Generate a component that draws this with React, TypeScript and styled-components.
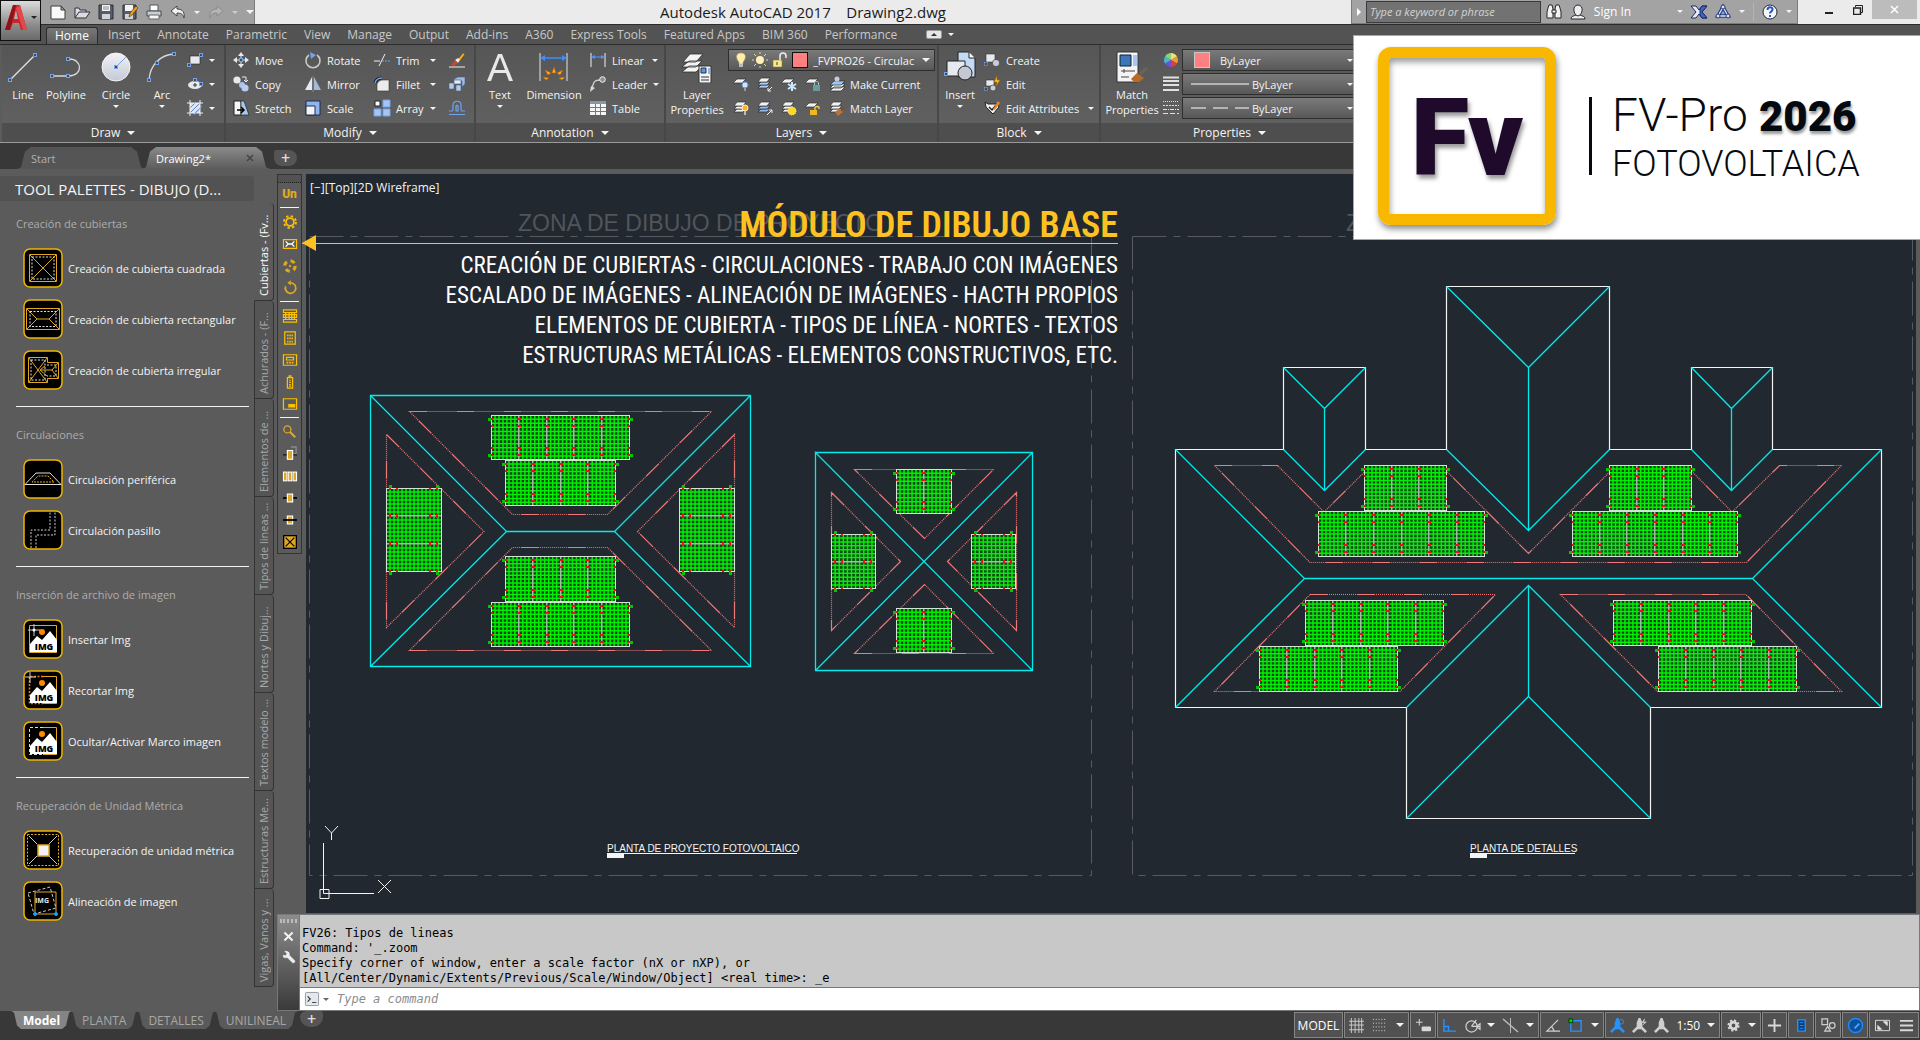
import React from "react";
import styled, { createGlobalStyle, css } from "styled-components";

const GlobalStyle = createGlobalStyle`
  *, *::before, *::after { box-sizing: border-box; }
  body { margin: 0; background: #383838; font-family: "Open Sans", "Noto Sans", sans-serif; font-size: 11px; color: #f4f4f4; }
  button, input, select { font: inherit; color: inherit; margin: 0; padding: 0; border: 0; background: none; outline: none; }
  button { cursor: pointer; }
  svg { display: block; flex: none; }
`;

/* ------------------------------------------------------------------ */
/* Icons                                                               */
/* ------------------------------------------------------------------ */

const BLUE = "#6fa4f4";
const LIGHT = "#e6e9f0";
const GOLD = "#e0a820";
const YELLOW = "#fcc000";

const Grip = ({ x, y }: { x: number; y: number }) => (
  <rect x={x - 1.5} y={y - 1.5} width="3" height="3" fill="#4a4a4a" stroke={BLUE} />
);

const Sheets = ({ top = "#f2f2f2", base = "#f2f2f2" }: { top?: string; base?: string }) => (
  <g stroke="#2e2e2e" strokeWidth=".7">
    <path d="M1 12l3-3h9l-3 3z" fill={base} />
    <path d="M1 9l3-3h9l-3 3z" fill={base} />
    <path d="M1 6l3-4h9l-3 4z" fill={top} />
  </g>
);

const Flat = () => <path d="M0 7l4-4h9l-4 4z" fill="#f2f2f2" stroke="#2e2e2e" strokeWidth=".7" />;

const Person = ({ color, children }: { color: string; children?: React.ReactNode }) => (
  <g fill={color}>
    <path d="M7 0h2l2 5v4l5 5-2 2-4-4H6l-4 4-2-2 5-5V5z" />
    {children}
  </g>
);

const glyphs: Record<string, React.ReactNode> = {
  new: <path d="M1 2h10l4 4v9H1z M11 2v4h4" fill="#fafafa" stroke="#3c3c3c" />,
  open: <path d="M1 14V4h4l1 2h6v2M1 14l4-6h11l-4 6z" fill="#d9dde3" stroke="#2f3237" />,
  save: <g><path d="M1 1h14v14H1z" fill="#565d68" stroke="#2b2f35" /><path d="M4 1h8v6H4z" fill="#f4f4f4" /><path d="M4 10h8v5H4z" fill="#cfd3da" /><path d="M5 3h6M5 5h6" stroke="#888" /></g>,
  saveas: <g><path d="M1 1h13v14H1z" fill="#565d68" stroke="#2b2f35" /><path d="M3 1h8v6H3z" fill="#f4f4f4" /><path d="M3 10h8v5H3z" fill="#cfd3da" /><path d="M7 13l1-4 6-7 2 2-6 7z" fill="#f0a020" stroke="#5a3a10" strokeWidth=".7" /></g>,
  print: <g><path d="M4 1h8v6H4z" fill="#fff" stroke="#555" /><path d="M1 7h14v5H1z" fill="#c9ced6" stroke="#44484f" /><path d="M3 11h10v4H3z" fill="#f6f6f6" stroke="#666" /></g>,
  undo: <path d="M7 2L1 7l6 5V9c4 0 6 1 7 5 1-5-1-9-7-9z" fill="#f2f2f2" stroke="#444" />,
  redo: <path d="M9 2l6 5-6 5V9c-4 0-6 1-7 5-1-5 1-9 7-9z" fill="#b5b5b5" stroke="#8a8a8a" />,
  search: <g fill="#f2f2f2" stroke="#26282c"><path d="M2 4l1-3h3l1 4v9H1V8z" /><path d="M14 4l-1-3h-3L9 5v9h6V8z" /><path d="M6 6h4v3H6z" /></g>,
  user: <g fill="#eceef2" stroke="#26282c"><path d="M1 15c0-3 3-3 5-4h4c2 1 5 1 5 4z" /><path d="M8 1c6 0 5 10 0 11C3 11 2 1 8 1z" /></g>,
  exchange: <g stroke="#1b2a66"><path d="M0 2h5l3 4 3-4h5l-5 6 5 6h-5l-3-4-3 4H0l5-6z" fill="#e8ecfa" /><path d="M9 5l2-3h5l-5 6 5 6h-5l-2-3z" fill="#3f63c8" /></g>,
  a360: <g fill="none" stroke="#1f3a80"><path d="M8 3l5 9H3z" strokeWidth="3.5" /><path d="M8 3l5 9H3z" stroke="#dfe6f8" strokeWidth="1.3" /><circle cx="8" cy="3" r="2" fill="#dfe6f8" /><circle cx="3" cy="12" r="2" fill="#dfe6f8" /><circle cx="13" cy="12" r="2" fill="#dfe6f8" /></g>,
  help: <g><circle cx="8" cy="8" r="7" fill="#f4f6fb" stroke="#26282c" /><path d="M5.5 6c0-4 5-3.500 5-.5 0 2-2.500 2-2.500 4M8 11v2" fill="none" stroke="#2456c8" strokeWidth="2" /></g>,

  rect: <g><path d="M3 4h10v8H3z" fill={LIGHT} stroke="#222" strokeWidth=".6" /><Grip x={14} y={3} /><Grip x={2} y={13} /></g>,
  ellipse: <g><ellipse cx="8" cy="9" rx="7" ry="4" fill={LIGHT} /><path d="M6 9h4M8 7v4" stroke="#333" /><Grip x={8} y={4} /><Grip x={14} y={8} /></g>,
  hatch: <g><path d="M3 3h10v10H3z" fill="#dce6f8" /><path d="M3 8l5-5M3 13L13 3M8 13l5-5" stroke="#5d83c8" /><path d="M3 0v16M13 0v16M0 3h16M0 13h16" stroke="#f0f0f0" /><path d="M7 15l8-9" stroke={BLUE} /></g>,
  move: <g><path d="M8 0l3 4H5zM8 16l3-4H5zM0 8l4-3v6zM16 8l-4-3v6z" fill={LIGHT} /><path d="M8 3v10M3 8h10" stroke={LIGHT} /><Grip x={8} y={8} /></g>,
  copy: <g><circle cx="4" cy="4" r="3.600" fill={LIGHT} /><circle cx="9" cy="9" r="3" fill="#a9c4f0" /><circle cx="12" cy="12" r="3.600" fill="#b6cbee" /><path d="M9 1h4v4M11 4l2 2 2-2" fill="none" stroke={LIGHT} /></g>,
  stretch: <g><path d="M1 1h7v14H1z" fill="#f6f6f6" stroke="#222" /><path d="M8 1h3l5 14H8z" fill="#a9c8f0" stroke="#222" strokeWidth=".7" /><path d="M4 10h6M8 7l3 3-3 3" stroke="#000" strokeWidth="1.500" fill="none" /></g>,
  rotate: <g fill="none"><path d="M4 3a7 7 0 1 0 8 0" stroke="#c9c9c9" strokeWidth="1.600" /><path d="M5 0l6 3-5 4z" fill={BLUE} /></g>,
  mirror: <g><path d="M7 1v13H0z" fill={LIGHT} /><path d="M9 1v13h7z" fill="#a5b8d6" /><path d="M8 0v16" stroke="#888" /></g>,
  scale: <g><path d="M1 1h14v14H1z" fill="#8fb4ee" stroke="#1d2f55" /><path d="M1 6h9v9H1z" fill="#f4f4f4" stroke="#1d2f55" /></g>,
  trim: <g fill="none"><path d="M0 9h6M11 2L5 14" stroke="#f0f0f0" /><path d="M8 9h2M11 9h2M14 9h2" stroke={BLUE} /></g>,
  fillet: <g><path d="M3 15V9c0-3 3-5 6-5h6v11z" fill="#ececec" stroke="#333" strokeWidth=".6" /><path d="M1 7c1-4 3-5 7-5" fill="none" stroke="#111" strokeWidth="3" /><path d="M1 7c1-4 3-5 7-5" fill="none" stroke={BLUE} strokeWidth="1.500" /></g>,
  array: <g><path d="M1 1h5v5H1z" fill="#fff" stroke="#222" /><path d="M9 0h7v7H9zM0 9h7v7H0zM9 9h7v7H9z" fill="#a9c4f0" stroke={BLUE} /></g>,
  erase: <g><path d="M0 15h16" stroke="#f0f0f0" /><path d="M9 7l5-6 2 1-5 7z" fill="#f0b030" stroke="#5a3a10" strokeWidth=".5" /><path d="M6 8l3-2 2 2-2 3z" fill="#eee" /><path d="M2 13l4-5 3 3-4 3z" fill="#c84a28" /></g>,
  explode: <g stroke="#46607f" strokeWidth=".6"><path d="M0 7h5v6H0zM7 9h5v6H7z" fill="#b6cbea" /><path d="M5 3l4-2h7v7l-3 3V5H5z" fill="#9dbbe6" /><path d="M5 4h7v4H5z" fill="#dfe9f8" /></g>,
  offset: <path d="M0 14.500h16M0 11h3c1 0 1-1 1-2V5c0-5 8-5 8 0v4c0 1 0 2 1 2h3M7 11V6c0-1 2-1 2 0v5z" fill="none" stroke={BLUE} strokeWidth="1.200" />,
  linear: <g fill="none"><path d="M1 1v14M15 1v14" stroke="#f0f0f0" /><path d="M3 5h10" stroke="#4e94ff" /><path d="M1 5l4-2v4zM15 5l-4-2v4z" fill="#4e94ff" /></g>,
  leader: <g><path d="M2 12c2-6 2-8 8-8" fill="none" stroke="#d8d8d8" strokeWidth="1.300" /><path d="M0 16l1-6 4 2z" fill="#d8d8d8" /><circle cx="12.500" cy="3.500" r="2.800" fill="#8a8f98" stroke="#f0f0f0" /></g>,
  table: <g><path d="M0 1h16v14H0z" fill="#f6f6f6" /><path d="M0 1h16v3H0z" fill="#8a96a8" /><path d="M5.500 4v11M10.500 4v11M0 7.500h16M0 11.500h16" stroke="#777" /></g>,
  bulb: <g><path d="M8 1c6 0 5 6 2 9v2H6v-2C3 7 2 1 8 1z" fill="#ffeeb0" stroke="#c8a850" strokeWidth=".6" /><path d="M6 12h4v3H6z" fill="#bbb" /></g>,
  sun: <g><circle cx="8" cy="8" r="4" fill="#fff0b8" /><path d="M8 0v2M8 14v2M0 8h2M14 8h2M2 2l2 2M12 12l2 2M14 2l-2 2M2 14l2-2" stroke="#e8d890" /></g>,
  unlock: <g><path d="M2 8h9v7H2z" fill="#f8e888" stroke="#8a7a30" strokeWidth=".6" /><path d="M9 8V4c0-4 6-4 6 0v2" fill="none" stroke="#f0f0f0" strokeWidth="1.500" /><path d="M6 10v3" stroke="#333" /></g>,
  lyOff: <g><Flat /><circle cx="12" cy="9" r="3" fill="#cfe4ff" stroke="#6b8fc8" /><path d="M11 12h2v3h-2z" fill="#999" /></g>,
  lyIso: <g><Sheets base="#a9cdf4" /><path d="M15 11l-4 4M11 12v3h3" stroke="#eee" fill="none" /></g>,
  lyFreeze: <g><Flat /><path d="M11 6v9M7 8l8 5M7 13l8-5" stroke="#cfe6ff" strokeWidth="2" /></g>,
  lyLock: <g><Flat /><path d="M8 9h7v6H8z" fill="#6a9c9c" /><path d="M9.500 9V7c0-2 4-2 4 0v2" fill="none" stroke="#a8c8c8" /></g>,
  lyCurrent: <g><path d="M1 15l4-4h11l-4 4zM1 12l4-4h11l-4 4z" fill="#f2f2f2" stroke="#2e2e2e" strokeWidth=".7" /><path d="M1 9l4-4h11l-4 4z" fill="#9ccaf8" stroke="#2e2e2e" strokeWidth=".7" /><circle cx="8" cy="3" r="2.500" fill="#c8ccd4" /></g>,
  lyOn: <g><Sheets /><circle cx="12" cy="8" r="3" fill="#ffb030" stroke="#fff0c0" /><path d="M11 11h2v4h-2z" fill="#bbb" /></g>,
  lyUniso: <g><Sheets base="#8fb4ee" /><path d="M10 15l5-5M12 10h3v3" stroke="#eee" fill="none" /></g>,
  lyThaw: <g><Sheets /><circle cx="11" cy="11" r="4" fill="#ffd820" stroke="#fff2a0" strokeDasharray="1 1" /></g>,
  lyUnlock: <g><Flat /><path d="M5 10h7v5H5z" fill="#f0b820" /><path d="M10 10V8c0-2 4-2 4 0v1" fill="none" stroke="#f0c850" strokeWidth="1.400" /></g>,
  lyMatch: <g><Sheets /><path d="M6 12l4-3 4 3-5 4z" fill="#c07030" /><path d="M12 10l4-3" stroke="#7a5030" strokeWidth="2" /></g>,
  create: <g stroke="#333" strokeWidth=".6"><path d="M2 2h9v8H2z" fill={LIGHT} /><circle cx="12" cy="11" r="3.600" fill="#c8ccd4" /><Grip x={2} y={12} /></g>,
  edit: <g stroke="#333" strokeWidth=".6"><path d="M2 4h8v6H2z" fill={LIGHT} /><circle cx="9" cy="12" r="3" fill="#c8ccd4" /><path d="M13 0l-3 6h3l-1 4 4-6h-3z" fill="#ffc020" stroke="#b06a00" /><Grip x={2} y={13} /></g>,
  attrs: <g><path d="M1 2l3 2h9l2 3-6 7-7-7z" fill="#f2f2f2" stroke="#222" /><path d="M5 7l3 3 4-5" fill="none" stroke="#222" strokeWidth="1.500" /><path d="M9 9l5-8 2 2-5 7z" fill="#e8862a" /></g>,
  wheel: <g><path d="M8 8V1a7 7 0 0 1 6 3.500z" fill="#f0e070" /><path d="M8 8l6-3.500a7 7 0 0 1 0 7z" fill="#f0963c" /><path d="M8 8l6 3.500A7 7 0 0 1 8 15z" fill="#e03c3c" /><path d="M8 8v7a7 7 0 0 1-6-3.500z" fill="#6a50d8" /><path d="M8 8l-6 3.500a7 7 0 0 1 0-7z" fill="#48b4d8" /><path d="M8 8L2 4.500A7 7 0 0 1 8 1z" fill="#8cd078" /></g>,
  weights: <path d="M0 1.500h16M0 5h16M0 9h16M0 14h16" stroke="#e0e0e0" strokeWidth="2" />,
  types: <g stroke="#e0e0e0"><path d="M0 1.500h16" strokeDasharray="1 1" /><path d="M0 5.500h16" strokeDasharray="2 1" /><path d="M0 9.500h16" strokeDasharray="4 1 1 1" /><path d="M0 13.500h16" strokeDasharray="5 2" /></g>,
  wrench: <path d="M2 1l3 3-1 2-3-1c-1 4 2 5 5 4l6 6c2 1 4-1 3-3L9 6c1-4-3-6-7-5z" fill="#eee" stroke="#555" strokeWidth=".5" />,
  cross: <path d="M3 3l10 10M13 3L3 13" stroke="#f2f2f2" strokeWidth="2.500" />,
  prompt: <g><rect x=".5" y=".5" width="15" height="15" rx="1" fill="#e4e8ee" stroke="#8a8f98" /><path d="M3 5l3 3-3 3" fill="none" stroke="#333" strokeWidth="1.300" /><path d="M8 12h5" stroke="#333" /></g>,

  /* vertical toolbar */
  gear: <g fill="none" stroke={YELLOW}><circle cx="8" cy="8" r="4.500" strokeWidth="2" /><circle cx="8" cy="8" r="6.800" strokeWidth="2.200" strokeDasharray="2.700 2.640" /></g>,
  roofbar: <g fill="none"><path d="M.500 3h15v10H.500z" stroke={YELLOW} strokeWidth="1.300" /><path d="M3 5l3 3-3 3M13 5l-3 3 3 3M6 8h4" stroke="#fff" strokeWidth="1.500" /></g>,
  cycle: <g fill="none" stroke={GOLD}><circle cx="8" cy="8" r="6" strokeWidth="3.500" strokeDasharray="5 4.400" /><circle cx="8" cy="8" r="1" fill={GOLD} /></g>,
  spin: <g fill="none" stroke={GOLD}><path d="M3 6a6 6 0 1 0 6-4" strokeWidth="2" /><path d="M9-1v6L5 2z" fill={GOLD} stroke="none" /></g>,
  strings: <g fill="none" stroke={YELLOW} strokeWidth="1.300"><path d="M.500 1h15v3H.500zM.500 6.500h15v3H.500zM.500 12h15v3H.500z" /><path d="M3 4v8M7 4v8M10 4v8M13 4v8" strokeWidth="1.500" /></g>,
  grid: <g><path d="M2 1h12v14H2z" fill="none" stroke={YELLOW} strokeWidth="1.400" /><path d="M5.500 4v9M8 4v9M10.500 4v9" stroke={YELLOW} strokeWidth="1.600" strokeDasharray="2 1.500" /></g>,
  inverter: <g fill="none" stroke={YELLOW} strokeWidth="1.400"><path d="M.500 2h15v12H.500z" /><path d="M4 5h8v3H4z" /><path d="M4 11h8" strokeWidth="2" strokeDasharray="2 1" /></g>,
  battery: <g fill="none" stroke={YELLOW} strokeWidth="1.400"><path d="M5 3h6v12H5zM7 1h2v2H7z" /><path d="M7 6h2M7 8.500h2M7 11h2M7 13h2" /></g>,
  board: <g><path d="M.500 2h15v12H.500z" fill="none" stroke={YELLOW} strokeWidth="1.400" /><path d="M6 8h8v4H6z" fill={YELLOW} /></g>,
  zoomkey: <g fill="none" stroke={GOLD}><circle cx="5" cy="5" r="4" strokeWidth="1.500" /><path d="M8 8l6 6" strokeWidth="2.500" /></g>,
  block1: <g><path d="M9 0h6v8h-3" fill="none" stroke="#8c8c8c" strokeWidth="1.500" /><path d="M0 9h16" stroke="#111" strokeWidth="1.300" /><rect x="5" y="4" width="6" height="10" fill={GOLD} stroke="#fff" strokeWidth="1.300" /></g>,
  block3: <g fill={GOLD} stroke="#fff" strokeWidth="1.200"><rect x=".5" y="3.500" width="4" height="10" /><rect x="6" y="3.500" width="4" height="10" /><rect x="11.500" y="3.500" width="4" height="10" /></g>,
  block4: <g><path d="M0 8h16" stroke="#000" strokeWidth="2" /><rect x="5" y="3.500" width="6" height="9" fill={GOLD} stroke="#fff" strokeWidth="1.300" /></g>,
  block5: <g><rect x="5" y="3.500" width="6" height="9" fill={GOLD} stroke="#fff" strokeWidth="1.300" /><path d="M0 8h16" stroke="#000" strokeWidth="2" /></g>,
  xbox: <g><rect x="0" y="0" width="16" height="16" fill="#000" /><rect x="1.500" y="1.500" width="13" height="13" fill={GOLD} /><path d="M3 3l10 10M13 3L3 13" stroke="#000" strokeWidth="1.300" /></g>,

  /* status bar */
  sGrid: <path d="M2.500 0v16M6.500 0v16M10.500 0v16M13.500 0v16M0 3.500h16M0 7.500h16M0 12.500h16" stroke="#cfcfcf" />,
  sSnap: <path d="M1 1.500h15M1 5.500h15M1 9.500h15M1 13.500h15" stroke="#e4e4e4" strokeDasharray="1 2" />,
  sDyn: <g><path d="M3.500 1v7M0 4.500h7" stroke="#ddd" /><rect x="6" y="9" width="10" height="5" rx="1" fill="#d8d8d8" /></g>,
  sOrtho: <path d="M2 1v13h13M2 9h5v5" fill="none" stroke="#2492ff" strokeWidth="1.500" />,
  sPolar: <g fill="none" stroke="#cfcfcf" strokeWidth="1.300"><circle cx="7" cy="9" r="6" /><path d="M7 9h9M7 9l5-7M12 9l4-3v6z" /></g>,
  sIso: <g stroke="#bdbdbd"><path d="M0 1l16 14" strokeWidth="1.500" /><path d="M8 0v16" /></g>,
  sTrack: <path d="M14 2L2 14h14M7 9l3 5" fill="none" stroke="#cfcfcf" strokeWidth="1.300" />,
  sOsnap: <g><path d="M3 3h11v11H3z" fill="none" stroke="#2492ff" strokeWidth="1.500" /><path d="M1 1h4v4H1z" fill="#00e000" stroke="#003800" /></g>,
  sAnno1: <Person color="#2492ff"><circle cx="12" cy="4" r="2.500" fill="none" stroke="#2492ff" /></Person>,
  sAnno2: <Person color="#cfcfcf"><path d="M14 0l-4 5h3l-3 4 6-5h-3z" /></Person>,
  sAnno3: <Person color="#cfcfcf" />,
  sGear: <g fill="none" stroke="#d8d8d8"><circle cx="8" cy="8" r="3.500" strokeWidth="3" /><circle cx="8" cy="8" r="5.500" strokeWidth="2" strokeDasharray="2.300 2" /></g>,
  sPlus: <path d="M8 1v14M1 8h14" stroke="#d8d8d8" strokeWidth="2" />,
  sDoc: <g><path d="M4 2h8v12H4z" fill="#123a70" stroke="#2492ff" strokeWidth="1.500" /><path d="M6 5h4M6 8h4M6 11h4" stroke="#2492ff" /></g>,
  sShapes: <g fill="none" stroke="#cfcfcf" strokeWidth="1.300"><path d="M1 1h6v6H1zM7 9l3 5H4z" /><circle cx="12" cy="8" r="3" /></g>,
  sPerf: <g><circle cx="8" cy="8" r="7.500" fill="#0f4f9c" stroke="#1a8cff" strokeWidth="1.500" /><path d="M7 11l5-5" stroke="#49a8ff" strokeWidth="2" /></g>,
  sFull: <g fill="none" stroke="#e0e0e0"><path d="M.5 2.500h15v11H.5z" /><path d="M3 8v4h4zM13 8V4H9z" fill="#e0e0e0" /></g>,
  sMenu: <path d="M1 3h14M1 8h14M1 13h14" stroke="#d8d8d8" strokeWidth="2" />,
};

const Glyph = ({ name, size = 16 }: { name: string; size?: number }) => (
  <svg width={size} height={size} viewBox="0 0 16 16" overflow="visible" aria-hidden="true">
    {glyphs[name]}
  </svg>
);

const Caret = styled.span<{ $size?: number; $color?: string }>`
  flex: none;
  width: 0;
  height: 0;
  border: ${(p) => p.$size ?? 3}px solid transparent;
  border-top-color: ${(p) => p.$color ?? "#f4f4f4"};
  border-bottom-width: 0;
`;

const large: Record<string, React.ReactNode> = {
  line: <g><path d="M4 28L27 5" stroke="#e4e4e4" strokeWidth="1.300" /><Grip x={28} y={4} /><Grip x={3} y={29} /></g>,
  polyline: <g><path d="M2 25h17c14 0 14-17 0-17" fill="none" stroke="#d8d8d8" strokeWidth="1.300" /><Grip x={18} y={8} /><Grip x={2} y={25} /><Grip x={18} y={25} /></g>,
  circle: <g><circle cx="16" cy="16" r="14" fill="url(#disc)" stroke="#f4f4f4" /><path d="M16 16l10-10" stroke={BLUE} /><Grip x={16} y={16} /></g>,
  arc: <g><path d="M3 29C4 14 14 4 28 3" fill="none" stroke="#d8d8d8" strokeWidth="1.300" /><Grip x={28} y={3} /><Grip x={3} y={29} /><Grip x={11} y={12} /></g>,
  text: <path d="M3 30L14 3h4l11 27h-4l-3-8H10l-3 8zM11 19h10L16 6z" fill="#e8e8e8" />,
  dimension: <g><path d="M2 2v28M29 2v28" stroke="#e4e4e4" /><path d="M4 7h23" stroke="#3f8cff" strokeWidth="1.500" /><path d="M2 7l5-3v6zM29 7l-5-3v6z" fill="#3f8cff" /><g fill="#ffb020" stroke="#c06000" strokeWidth=".6"><path d="M14 22l2-6 2 6zM10 24l-3-5 6 3zM22 24l3-5-6 3zM8 29l-3-3 6 1zM24 29l3-3-6 1z" /></g></g>,
  layers: <g><g fill="#f4f4f4" stroke="#2e2e2e" strokeWidth=".8"><path d="M1 21l7-6h13l-6 6zM1 16l7-6h13l-6 6zM2 11l7-8h13l-7 8z" /></g><path d="M18 15h12v17H18z" fill="#f2f4f8" stroke="#333" /><path d="M20 17h5v5h-5z" fill="#5f95d8" stroke="#234" /><path d="M27 17h2v6h-2z" fill="#8fb4ee" /><path d="M20 26h8M20 29h8" stroke="#333" /></g>,
  insert: <g><path d="M14 1h11l6 6v19H14z" fill="#c3daf6" stroke="#222" /><path d="M25 1v6h6" fill="#fff" stroke="#222" /><path d="M3 10h18v15H3z" fill={LIGHT} stroke="#222" /><circle cx="21" cy="22" r="7" fill="#c4c8d0" stroke="#222" /><Grip x={2} y={23} /></g>,
  match: <g><path d="M1 1h21v30H1z" fill="#f4f4f4" stroke="#333" /><path d="M4 4h11v11H4z" fill="#3b76b8" stroke="#123" /><path d="M17 4h4v11h-4z" fill="#a9c8f0" /><path d="M5 20h14M5 26h8M8 18v4" stroke="#444" /><path d="M15 28l6-6 7 5-5 4c-4 1-6-1-8-3z" fill="#b86a28" /><path d="M24 23l7-6" stroke="#6b625a" strokeWidth="3" /></g>,
};

const LargeGlyph = ({ name }: { name: string }) => (
  <svg width="32" height="32" viewBox="0 0 32 32" aria-hidden="true">
    <defs>
      <linearGradient id="disc" x2="0" y2="1">
        <stop offset="0" stopColor="#f2f3f6" />
        <stop offset="1" stopColor="#c4c9d6" />
      </linearGradient>
    </defs>
    {large[name]}
  </svg>
);

/* ------------------------------------------------------------------ */
/* Title bar                                                           */
/* ------------------------------------------------------------------ */

const Screen = styled.div`
  position: relative;
  display: flex;
  flex-direction: column;
  min-height: 100vh;
`;

const TitleBar = styled.header`
  display: flex;
  height: 24px;
  background: #ebebeb;
  color: #1a1a1a;
`;

const AppButton = styled.button`
  position: absolute;
  z-index: 2;
  top: 0;
  left: 0;
  width: 41px;
  height: 41px;
  display: flex;
  align-items: center;
  justify-content: center;
  gap: 3px;
  padding-bottom: 6px;
  border: 1px solid #111;
  background: linear-gradient(#dcdcdc, #8d8d8d 60%, #6a6a6a);
`;

const QuickAccess = styled.div`
  display: flex;
  align-items: center;
  gap: 8px;
  width: 255px;
  padding-left: 50px;
  background: #a0a0a0;
  border-right: 1px solid #7c7c7c;
`;

const ToolButton = styled.button`
  display: flex;
  align-items: center;
  justify-content: center;
`;

const WindowTitle = styled.h1`
  flex: 1;
  margin: 0;
  font-size: 15px;
  line-height: 25px;
  font-weight: 400;
  text-align: center;
  white-space: pre;
`;

const InfoCenter = styled.form`
  display: flex;
  align-items: center;
  gap: 8px;
  width: 447px;
  padding: 0 5px;
  background: #a3a3a3;
  border: solid #7c7c7c;
  border-width: 0 1px 1px;
  color: #fff;
  font-size: 12px;
`;

const Expander = styled.span`
  border: 4px solid transparent;
  border-left-color: #fff;
  border-right-width: 0;
`;

const SearchBox = styled.input`
  width: 182px;
  height: 22px;
  margin: 0 -3px 0 -3px;
  padding: 0 3px;
  border: 1px solid #3a3a3a;
  background: #727272;
  font-size: 11px;
  font-style: italic;
  &::placeholder { color: #d2d2d2; opacity: 1; }
`;

const SignIn = styled.button`
  display: flex;
  align-items: center;
  justify-content: space-between;
  width: 93px;
`;

const Rule = styled.span`
  width: 1px;
  height: 18px;
  background: #b4b4b4;
`;

const WindowButtons = styled.div`
  display: flex;
  width: 122px;
  padding-left: 16px;
  svg { margin: auto; }
`;

const WindowButton = styled.button<{ $close?: boolean }>`
  flex: ${(p) => (p.$close ? "0 0 45px" : "1")};
  height: 19px;
  margin-right: ${(p) => (p.$close ? "3px" : "0")};
  background: ${(p) => (p.$close ? "#bcbcbc" : "none")};
`;

/* ------------------------------------------------------------------ */
/* Ribbon                                                              */
/* ------------------------------------------------------------------ */

const RibbonTabs = styled.nav`
  display: flex;
  gap: 1px;
  height: 20px;
  padding-left: 46px;
  background: #535353;
  border-top: 1px solid #2c2c2c;
  font-size: 12px;
`;

const RibbonTab = styled.button<{ $active?: boolean }>`
  padding: 0 8px;
  line-height: 19px;
  color: ${(p) => (p.$active ? "#fff" : "#c8c8c8")};
  ${(p) => p.$active && css`
    margin: 2px 1px 0 0;
    line-height: 16px;
    border: 1px solid #2c2c2c;
    border-bottom: 0;
    border-radius: 3px 3px 0 0;
    background: linear-gradient(#787878, #5c5c5c);
  `}
`;

const Minimize = styled.button`
  display: flex;
  align-items: center;
  gap: 6px;
  padding-left: 20px;
`;

const MinimizeChip = styled.span`
  padding: 2px 4px;
  border-radius: 2px;
  background: #e6e6e6;
  border: 1px solid #999;
  &::before { content: ""; display: block; border: 3px solid transparent; border-bottom-color: #333; border-top: 0; }
`;

const Ribbon = styled.div`
  display: flex;
  height: 99px;
  padding-left: 2px;
  background: #5c5c5c;
  border-top: 1px solid #2c2c2c;
  border-bottom: 1px solid #9a9a9a;
  overflow: hidden;
`;

const Panel = styled.section<{ $width: number }>`
  flex: 0 0 ${(p) => p.$width}px;
  display: flex;
  flex-direction: column;
  border-right: 2px solid #474747;
`;

const PanelBody = styled.div`
  flex: 1;
  display: flex;
  padding: 3px 0 0;
  background: linear-gradient(#565656, #606060);
`;

const PanelTitle = styled.button`
  display: flex;
  align-items: center;
  justify-content: center;
  gap: 7px;
  height: 19px;
  background: #4e4e4e;
  font-size: 12px;
`;

const BigTool = styled.button<{ $width: number }>`
  width: ${(p) => p.$width}px;
  display: flex;
  flex-direction: column;
  align-items: center;
  padding-top: 3px;
  line-height: 15px;
  span { margin-top: 3px; }
`;

const BigLabel = styled.b`
  font-weight: 400;
  margin-top: 4px;
`;

const Stack = styled.div<{ $width?: number }>`
  display: flex;
  flex-direction: column;
  width: ${(p) => (p.$width ? p.$width + "px" : "auto")};
`;

const SmallTool = styled.button`
  display: flex;
  align-items: center;
  gap: 6px;
  height: 24px;
  white-space: nowrap;
`;

const Spread = styled.span`
  flex: 1;
  text-align: left;
`;

const IconRow = styled.div`
  display: flex;
  align-items: center;
  gap: 8px;
  height: 24px;
  padding-left: 5px;
`;

const ToolLabel = styled(ToolButton)`
  margin-left: -3px;
`;

const Combo = styled.label<{ $width: number }>`
  display: flex;
  align-items: center;
  gap: 3px;
  width: ${(p) => p.$width}px;
  height: 22px;
  margin: 1px 0;
  padding: 0 4px;
  border: 1px solid #2e2e2e;
  background: linear-gradient(#7a7a7a, #585858);
  select { flex: 1; min-width: 0; appearance: none; text-overflow: clip; overflow: hidden; white-space: nowrap; }
`;

const Swatch = styled.i<{ $light?: boolean }>`
  width: 16px;
  height: 16px;
  margin: ${(p) => (p.$light ? "0 7px" : "0 2px")};
  background: #ff8080;
  border: 1px solid ${(p) => (p.$light ? "#c8c8c8" : "#111")};
`;

/* ------------------------------------------------------------------ */
/* File tabs                                                           */
/* ------------------------------------------------------------------ */

const FileTabs = styled.nav`
  display: flex;
  align-items: flex-end;
  height: 26px;
  padding-left: 17px;
  background: #383838;
`;

const FileTab = styled.button<{ $active?: boolean }>`
  display: flex;
  align-items: center;
  justify-content: space-between;
  width: 128px;
  height: 22px;
  margin-right: -3px;
  padding: 0 16px 0 14px;
  color: ${(p) => (p.$active ? "#fff" : "#b0b0b0")};
  background: ${(p) => (p.$active ? "linear-gradient(#8a8a8a, #5c5c5c)" : "#555")};
  clip-path: polygon(0 100%, 4px 92%, 8px 20%, 14px 0, calc(100% - 14px) 0, calc(100% - 8px) 20%, calc(100% - 4px) 92%, 100% 100%);
`;

const AddTab = styled.button`
  width: 23px;
  height: 16px;
  margin: 0 0 3px 7px;
  border-radius: 3px 10px 10px 10px;
  background: #555;
  color: #ddd;
  font-size: 16px;
  line-height: 14px;
  font-weight: 600;
`;

/* ------------------------------------------------------------------ */
/* Workspace                                                           */
/* ------------------------------------------------------------------ */

const Workspace = styled.main`
  flex: 1;
  display: flex;
  background: #5b5b5b;
`;

const PaletteDock = styled.aside`
  flex: 0 0 277px;
  display: flex;
  padding-top: 7px;
`;

const Palette = styled.div`
  width: 254px;
`;

const PaletteTitle = styled.h2`
  height: 25px;
  margin: 0 0 14px;
  padding-left: 15px;
  border-radius: 0 4px 0 0;
  background: #525252;
  font-size: 15px;
  line-height: 26px;
  font-weight: 400;
`;

const Group = styled.section`
  margin: 0 5px 19px 16px;
  &:not(:last-child) { border-bottom: 1px solid #f4f4f4; padding-bottom: 16px; }
  h3 { margin: 0 0 15px; font-size: 11px; line-height: 18px; font-weight: 400; color: #adadad; }
`;

const PaletteItem = styled.button`
  display: flex;
  align-items: center;
  gap: 5px;
  margin-left: 7px;
  white-space: nowrap;
  & + & { margin-top: 11px; }
`;

const SideTabs = styled.nav`
  width: 20px;
  margin-top: 27px;
`;

const SideTab = styled.button<{ $active?: boolean }>`
  display: block;
  width: 20px;
  height: 98px;
  padding: 5px 0;
  border: 1px solid #333;
  border-top: 0;
  border-left-color: ${(p) => (p.$active ? "transparent" : "#333")};
  border-radius: 0 4px 4px 0;
  background: ${(p) => (p.$active ? "#5b5b5b" : "#555")};
  color: ${(p) => (p.$active ? "#fff" : "#a8a8a8")};
  span { display: block; height: 88px; writing-mode: vertical-rl; transform: rotate(180deg); line-height: 18px; text-align: left; white-space: nowrap; }
`;

const Stage = styled.div`
  flex: 1;
  min-width: 0;
  display: flex;
  flex-direction: column;
  padding-top: 5px;
`;

const DrawingRow = styled.div`
  flex: 1;
  display: flex;
  align-items: flex-start;
  gap: 4px;
  padding: 0 4px 1px 0;
`;

const SideToolbar = styled.div`
  width: 25px;
  display: flex;
  flex-direction: column;
  align-items: center;
  border: 1px solid #333;
  background: #5b5b5b;
`;

const ToolbarGrip = styled.i`
  width: 23px;
  height: 8px;
  background: #525252;
  border-bottom: 1px dotted #222;
`;

const ToolbarSlot = styled.button`
  display: grid;
  place-items: center;
  width: 21px;
  height: 22px;
  color: ${GOLD};
  font-family: Roboto, sans-serif;
  font-size: 12px;
  font-weight: 900;
`;

const ToolbarRule = styled.i`
  width: 19px;
  height: 1px;
  margin: 2px 0 3px;
  background: #f4f4f4;
`;

const Viewport = styled.div`
  position: relative;
  flex: 1;
  align-self: stretch;
  min-width: 0;
  background: #212830;
`;

const Drawing = styled.svg`
  position: absolute;
  inset: 0;
  width: 100%;
  height: 100%;
`;

const ViewLabel = styled.div`
  position: absolute;
  top: 5px;
  left: 4px;
  font-size: 12px;
  line-height: 18px;
`;

const Callout = styled.div`
  position: absolute;
  top: 33px;
  left: -4px;
  width: 816px;
  text-align: right;
  font-family: "Roboto Condensed", "Liberation Sans Narrow", Roboto, sans-serif;
  white-space: nowrap;
  h2 {
    margin: 0;
    color: #fdc221;
    font-size: 36px;
    line-height: 36px;
    font-weight: 600;
  }
  p { margin: 0; color: #fff; font-size: 23px; line-height: 30px; }
`;

const CalloutArrow = styled.div`
  position: relative;
  height: 1px;
  margin-bottom: 7px;
  background: #fdc221;
  &::before {
    content: "";
    position: absolute;
    left: 0;
    top: -8px;
    border: 8px solid transparent;
    border-left-width: 0;
    border-right: 14px solid #fdc221;
  }
`;

/* ------------------------------------------------------------------ */
/* Command line                                                        */
/* ------------------------------------------------------------------ */

const CommandPanel = styled.section`
  display: flex;
  border: 1px solid #787878;
  background: #c8c8c8;
`;

const CommandHandle = styled.div`
  width: 22px;
  display: flex;
  flex-direction: column;
  align-items: center;
  gap: 7px;
  padding-top: 4px;
  background: linear-gradient(#8c8c8c, #3a3a3a);
  border-right: 1px solid #777;
`;

const HandleDots = styled.i`
  width: 17px;
  height: 4px;
  border-top: 2px dotted #bbb;
  border-bottom: 2px dotted #bbb;
`;

const CommandMain = styled.div`
  flex: 1;
  font-family: "DejaVu Sans Mono", monospace;
  font-size: 12px;
  color: #000;
`;

const History = styled.pre`
  margin: 0;
  padding: 11px 2px 1px;
  font: inherit;
  line-height: 15px;
`;

const Prompt = styled.label`
  display: flex;
  align-items: center;
  gap: 4px;
  height: 23px;
  padding-left: 5px;
  border-top: 1px solid #787878;
  background: #fff;
  input { flex: 1; padding-left: 4px; font-style: italic; }
  input::placeholder { color: #8c8c8c; opacity: 1; }
`;

/* ------------------------------------------------------------------ */
/* Bottom bar                                                          */
/* ------------------------------------------------------------------ */

const BottomBar = styled.footer`
  display: flex;
  align-items: flex-start;
  justify-content: space-between;
  height: 29px;
  padding: 0 1px 0 11px;
  background: #383838;
  font-size: 12px;
`;

const LayoutTabs = styled.nav`
  display: flex;
`;

const LayoutTab = styled.button<{ $active?: boolean }>`
  height: 18px;
  margin-right: -2px;
  padding: 0 12px;
  line-height: 17px;
  font-weight: ${(p) => (p.$active ? 700 : 400)};
  color: ${(p) => (p.$active ? "#fff" : "#a8a8a8")};
  background: ${(p) => (p.$active ? "#858585" : "#5a5a5a")};
  clip-path: polygon(0 0, 3px 8%, 6px 80%, 10px 100%, calc(100% - 10px) 100%, calc(100% - 6px) 80%, calc(100% - 3px) 8%, 100% 0);
`;

const AddLayout = styled(AddTab)`
  margin: 0 0 0 4px;
  border-radius: 6px 3px 10px 10px;
`;

const StatusBar = styled.div`
  display: flex;
  gap: 1px;
  padding-top: 1px;
`;

const Segment = styled.div<{ $width: number }>`
  display: flex;
  align-items: center;
  justify-content: space-around;
  width: ${(p) => p.$width}px;
  height: 26px;
  border: 1px solid #858585;
  background: #515151;
  color: #fff;
`;

/* ------------------------------------------------------------------ */
/* Product badge                                                       */
/* ------------------------------------------------------------------ */

const ProductCard = styled.section`
  position: absolute;
  z-index: 3;
  top: 35px;
  right: 0;
  width: 567px;
  height: 205px;
  display: flex;
  align-items: center;
  padding-left: 24px;
  border: 1px solid #d8a818;
  border-right: 0;
  background: #fff;
  color: #050a10;
  font-family: Roboto, sans-serif;
`;

const Badge = styled.div`
  display: grid;
  place-items: center;
  width: 178px;
  height: 178px;
  margin-bottom: 3px;
  padding-top: 6px;
  border: 11px solid #f8b800;
  border-radius: 13px;
  box-shadow: 1px 4px 6px rgba(0, 0, 0, 0.45), inset 1px 4px 6px rgba(0, 0, 0, 0.4);
  color: #1f0a2c;
  font-size: 107px;
  line-height: 120px;
  font-weight: 900;
  text-shadow: 2px 4px 4px rgba(0, 0, 0, 0.4);
`;

const BadgeRule = styled.i`
  width: 3px;
  height: 78px;
  margin: 0 20px 4px 33px;
  background: #050a10;
`;

const ProductName = styled.div`
  font-size: 46px;
  line-height: 45px;
  font-weight: 300;
  padding-top: 8px;
  strong { font-size: 42px; font-weight: 900; text-shadow: 1px 3px 3px rgba(0, 0, 0, 0.4); }
  div { font-size: 36px; line-height: 51px; }
`;

/* ------------------------------------------------------------------ */
/* Palette item icons (40 x 40)                                        */
/* ------------------------------------------------------------------ */

const Mountain = () => (
  <g>
    <circle cx="19" cy="13" r="3" fill="#ff8a00" />
    <path d="M7 33V25l7-8 5 4 8-9 7 9v12z" fill="#fff" />
    <text x="21" y="31" textAnchor="middle" fontFamily="Open Sans, sans-serif" fontWeight="800" fontSize="9" fill="#000">IMG</text>
  </g>
);

const roofArt: Record<string, React.ReactNode> = {
  square: <g><path d="M6.500 6.500h27v27h-27zM7 7l26 26M33 7L7 33" stroke={GOLD} /><path d="M9 9h22v22H9z" stroke="#ddd" strokeDasharray="2 1.500" /></g>,
  rectangle: <g><path d="M3.500 9.500h33v21h-33zM4 10l10 10-10 10M36 10L26 20l10 10M14 20h12" stroke={GOLD} /><path d="M7 12.500h26v15H7z" stroke="#ddd" strokeDasharray="2 1.500" /></g>,
  irregular: <g><path d="M5.500 7.500h19v5h11v16h-11v4h-19zM6 8l9 12-9 12M24 8l-9 12 9 12M18 20h11l6-7M22 16l-5 4 7 6M29 20l6 8" stroke={GOLD} /><path d="M8 10h14v20H8zM24 15h9v11h-9" stroke="#ddd" strokeDasharray="2 1.500" /></g>,
  perimeter: <g><path d="M2 25.500L13 14h14l11 11.500z" stroke="#ddd" /><path d="M9 23l6-6h10l6 6z" stroke={GOLD} strokeDasharray="2 1" /></g>,
  corridor: <path d="M8 38V20h19V2M13 38V25h19V2" stroke="#ccc" strokeDasharray="2 1.500" />,
  insertImg: <g><path d="M6.500 6.500h27v27h-27z" stroke={GOLD} /><Mountain /><path d="M11 5v12M5 11h12" stroke="#ccc" /><circle cx="11" cy="11" r="1.500" fill="#fff" /></g>,
  cropImg: <g><path d="M20 6.500h13.500v27H20" stroke={GOLD} /><path d="M20 6.500H6.500v27H20" stroke="#ff7a00" strokeWidth="1.500" strokeDasharray="2 1.500" /><Mountain /><path d="M7 2v11M2 7h11" stroke="#ccc" /></g>,
  frameImg: <g><path d="M20 6.500h13.500v27H20" stroke={GOLD} /><path d="M20 6.500H6.500v27H20" stroke="#ddd" strokeDasharray="3 2" /><Mountain /></g>,
  metric: <g><path d="M4.500 4.500h31v31h-31z" stroke={GOLD} strokeDasharray="2 1.500" /><path d="M6 6l8 8M34 6l-8 8M6 34l8-8M34 34l-8-8" stroke="#ccc" /><rect x="15" y="15" width="11" height="11" fill="#f2f2f2" stroke={GOLD} strokeWidth="1.500" /></g>,
  align: <g><path d="M12 11h21v22H12z" stroke={GOLD} /><path d="M5 12l22-6 6 21-22 6z" stroke="#ccc" strokeDasharray="3 2" /><text x="19" y="22" textAnchor="middle" fontFamily="Open Sans, sans-serif" fontWeight="700" fontSize="7" fill="#e8e8e8">IMG</text><circle cx="12" cy="33" r="1.500" fill="#18a0ff" stroke="#18a0ff" /><circle cx="33" cy="33" r="1.500" fill="#18a0ff" stroke="#18a0ff" /></g>,
};

const RoofIcon = ({ name }: { name: string }) => (
  <svg width="40" height="40" viewBox="0 0 40 40" fill="none" aria-hidden="true">
    <rect x="1" y="1" width="38" height="38" rx="6" fill="#000" stroke="#f0b400" strokeWidth="1.500" />
    {roofArt[name]}
  </svg>
);

/* ------------------------------------------------------------------ */
/* Model space drawing                                                 */
/* ------------------------------------------------------------------ */

type ArrayProps = { x: number; y: number; length: number; depth: number; panels: number; vertical?: boolean };

const PanelArray = ({ x, y, length, depth, panels, vertical }: ArrayProps) => {
  const box = (u: number, v: number, du: number, dv: number) =>
    vertical ? `M${x + v} ${y + u}h${dv}v${du}h${-dv}z` : `M${x + u} ${y + v}h${du}v${dv}h${-du}z`;
  const step = length / panels;
  let cells = "";
  for (let p = 0; p < panels; p++)
    for (let i = 1; i < 7; i++) cells += box(p * step + (i * step) / 7 - 0.7, 0, 1.5, depth);
  const rows = Math.round(depth / 4);
  for (let j = 1; j < rows; j++) cells += box(0, (j * depth) / rows - 0.7, length, 1.5);
  const frames = box(0, 0, length, 1) + box(0, depth - 1, length, 1) + box(0, 0, 1, depth) + box(length - 1, 0, 1, depth);
  let seams = "";
  let clamps = "";
  const clampRows = [4, 11, depth - 12, depth - 5];
  for (let p = 0; p <= panels; p++) {
    const end = p === 0 || p === panels;
    if (!end) seams += box(Math.round(p * step) - 1, 0, 1.5, depth);
    clampRows.forEach((v) => {
      clamps += box(Math.round(p * step) - (p === 0 ? 0 : 2), v - 1, end ? 2 : 4, 2);
    });
  }
  const rails = box(-3, 3, 3, 3) + box(length, 3, 3, 3) + box(-3, depth - 6, 3, 3) + box(length, depth - 6, 3, 3);
  return (
    <g>
      <path d={box(0, 0, length, depth)} fill="#10421c" />
      <path d={cells} fill="#00f000" />
      <path d={seams} fill="#a8b8a8" />
      <path d={frames} fill="#d4e4d4" />
      <path d={rails} fill="#00c800" />
      <path d={clamps} fill="#f01010" />
    </g>
  );
};

const arrays: ArrayProps[] = [
  { x: 491, y: 415, length: 139, depth: 45, panels: 5 },
  { x: 505, y: 460, length: 111, depth: 46, panels: 4 },
  { x: 505, y: 556, length: 111, depth: 46, panels: 4 },
  { x: 491, y: 602, length: 139, depth: 45, panels: 5 },
  { x: 386, y: 488, length: 84, depth: 56, panels: 3, vertical: true },
  { x: 679, y: 488, length: 84, depth: 56, panels: 3, vertical: true },
  { x: 896, y: 469, length: 56, depth: 45, panels: 2 },
  { x: 896, y: 608, length: 56, depth: 45, panels: 2 },
  { x: 831, y: 534, length: 55, depth: 45, panels: 2, vertical: true },
  { x: 971, y: 534, length: 55, depth: 45, panels: 2, vertical: true },
  { x: 1364, y: 465, length: 83, depth: 46, panels: 3 },
  { x: 1318, y: 511, length: 167, depth: 46, panels: 6 },
  { x: 1609, y: 465, length: 83, depth: 46, panels: 3 },
  { x: 1572, y: 511, length: 166, depth: 46, panels: 6 },
  { x: 1305, y: 600, length: 139, depth: 46, panels: 5 },
  { x: 1259, y: 646, length: 139, depth: 46, panels: 5 },
  { x: 1613, y: 600, length: 139, depth: 46, panels: 5 },
  { x: 1658, y: 646, length: 139, depth: 46, panels: 5 },
];

const walkways = [
  "M409.500 411.500H711.500L607.500 514.500H512.500z",
  "M409.500 650.500H711.500L607.500 547.500H512.500z",
  "M386.500 434.500L484 531.500L386.500 627.500z",
  "M734.500 434.500L637.500 531.500L734.500 627.500z",
  "M854.500 469.500H993.500L924.500 538.500z",
  "M854.500 653.500H993.500L924.500 584.500z",
  "M831.500 492.500L900.500 561.500L831.500 630.500z",
  "M1016.500 492.500L947.500 561.500L1016.500 630.500z",
  "M1214.500 465.500H1277.500L1324 512L1371 465.500H1441L1528.500 553.500L1616 465.500H1686L1732 512L1779.500 465.500H1841.500L1746.500 562.500H1310z",
  "M1310 594.500H1495.500L1400 691.500H1214.500z",
  "M1560.500 594.500H1746L1841.500 691.500H1657.500z",
];

const ModelSpace = () => (
  <Drawing viewBox="306 174 1610 738" preserveAspectRatio="xMinYMin meet" role="img" aria-label="Planta de cubiertas">
    <g fill="none" stroke="#565b61" strokeDasharray="34 7 7 7">
      <path d="M309.500 236.500H1091.500V875.500H309.500z" />
      <path d="M1132.500 236.500H1912.500V875.500H1132.500z" />
    </g>
    <g fill="#50555b" fontFamily="Liberation Sans, Arial, sans-serif" fontSize="23">
      <text x="518" y="231">ZONA DE DIBUJO DE PROYECTO</text>
      <text x="1346" y="231">ZONA DE DIBUJO DE DETALLES</text>
    </g>
    <g fill="none" stroke="#00ecec" strokeWidth="1.300">
      <path d="M370.500 395.500H750.500V666.500H370.500zM370.500 395.500L506.500 531.500L370.500 666.500M750.500 395.500L614.500 531.500L750.500 666.500M506.500 531.500H614.500" />
      <path d="M815.500 452.500H1032.500V670.500H815.500V452.500L1032.500 670.500M1032.500 452.500L815.500 670.500" />
    </g>
    <path
      d="M1175.500 449.500H1283.500V367.500H1365.500V449.500H1446.500V286.500H1609.500V449.500H1691.500V367.500H1772.500V449.500H1881.500V707.500H1650.500V818.500H1406.500V707.500H1175.500z"
      fill="none"
      stroke="#f4f4f4"
      strokeWidth="1.200"
    />
    <path
      d="M1175.500 449.500L1304.500 578.500L1175.500 707.500M1881.500 449.500L1752.500 578.500L1881.500 707.500M1304.500 578.500H1752.500
         M1283.500 367.500L1324.500 408.500L1365.500 367.500M1324.500 408.500V490.500M1283.500 449.500L1324.500 490.500L1365.500 449.500
         M1691.500 367.500L1731.500 408.500L1772.500 367.500M1731.500 408.500V490.500M1691.500 449.500L1731.500 490.500L1772.500 449.500
         M1446.500 286.500L1528.500 367.500L1609.500 286.500M1528.500 367.500V530.500M1446.500 449.500L1528.500 530.500L1609.500 449.500
         M1406.500 707.500L1528.500 585.500L1650.500 707.500M1528.500 585.500V696.500M1406.500 818.500L1528.500 696.500L1650.500 818.500"
      fill="none"
      stroke="#00ecec"
      strokeWidth="1.300"
    />
    <g fill="none" stroke="#f07878" strokeWidth="1.200" strokeDasharray="18 1 1 1 1 1 1 1 1 1 1 1 1 1 1 1 1 1 1 1 1 1 1 1 1 1 1 1 1 1">
      {walkways.map((d) => <path key={d} d={d} />)}
    </g>
    {arrays.map((a) => <PanelArray key={`${a.x}-${a.y}`} {...a} />)}
    <g fill="#f4f4f4" fontFamily="Liberation Sans, Arial, sans-serif" fontSize="10">
      <text x="607" y="852">PLANTA DE PROYECTO FOTOVOLTAICO</text>
      <path d="M607 853h190v1H607zM607 853h17v5h-17z" />
      <text x="1470" y="852">PLANTA DE DETALLES</text>
      <path d="M1470 853h105v1h-105zM1470 853h17v5h-17z" />
    </g>
    <g fill="none" stroke="#f4f4f4">
      <path d="M323.500 843V893.500H374M320 889.500h9v9h-9z" />
      <path d="M325 826l6.500 7 6.500-7M331.500 833v7M378 880l13 13M391 880l-13 13" />
    </g>
  </Drawing>
);

/* ------------------------------------------------------------------ */
/* Composition                                                         */
/* ------------------------------------------------------------------ */

const Big = ({ icon, width, children, menu }: { icon: string; width: number; children: React.ReactNode; menu?: boolean }) => (
  <BigTool $width={width}>
    <LargeGlyph name={icon} />
    <BigLabel>{children}</BigLabel>
    {menu && <Caret />}
  </BigTool>
);

const Small = ({ icon, label, menu }: { icon: string; label?: string; menu?: boolean }) => (
  <SmallTool aria-label={label || icon}>
    <Glyph name={icon} />
    {label && <Spread>{label}</Spread>}
    {menu && <Caret />}
  </SmallTool>
);

const RibbonPanel = ({ title, width, children }: { title: string; width: number; children: React.ReactNode }) => (
  <Panel $width={width}>
    <PanelBody>{children}</PanelBody>
    <PanelTitle>
      {title}
      <Caret $size={4} />
    </PanelTitle>
  </Panel>
);

const Gap = styled.i<{ $w: number }>`
  flex: none;
  width: ${(p) => p.$w}px;
`;

const ribbonTabs = ["Home", "Insert", "Annotate", "Parametric", "View", "Manage", "Output", "Add-ins", "A360", "Express Tools", "Featured Apps", "BIM 360", "Performance"];

const paletteGroups = [
  { title: "Creación de cubiertas", items: [["square", "Creación de cubierta cuadrada"], ["rectangle", "Creación de cubierta rectangular"], ["irregular", "Creación de cubierta irregular"]] },
  { title: "Circulaciones", items: [["perimeter", "Circulación periférica"], ["corridor", "Circulación pasillo"]] },
  { title: "Inserción de archivo de imagen", items: [["insertImg", "Insertar Img"], ["cropImg", "Recortar Img"], ["frameImg", "Ocultar/Activar Marco imagen"]] },
  { title: "Recuperación de Unidad Métrica", items: [["metric", "Recuperación de unidad métrica"], ["align", "Alineación de imagen"]] },
];

const sideTabs = ["Cubiertas - (Fv...", "Achurados - (F...", "Elementos de ...", "Tipos de lineas ...", "Nortes y Dibuj...", "Textos modelo ...", "Estructuras Me...", "Vigas, Vanos y ..."];

const toolbarGroups = [
  ["gear", "roofbar", "cycle", "spin"],
  ["strings", "grid", "inverter", "battery", "board"],
  ["zoomkey", "block1", "block3", "block4", "block5", "xbox"],
];

const statusSegments: { width: number; items: string[] }[] = [
  { width: 49, items: ["MODEL"] },
  { width: 65, items: ["sGrid", "sSnap", "caret"] },
  { width: 26, items: ["sDyn"] },
  { width: 102, items: ["sOrtho", "sPolar", "caret", "sIso", "caret"] },
  { width: 64, items: ["sTrack", "sOsnap", "caret"] },
  { width: 115, items: ["sAnno1", "sAnno2", "sAnno3", "1:50", "caret"] },
  { width: 40, items: ["sGear", "caret"] },
  { width: 25, items: ["sPlus"] },
  { width: 26, items: ["sDoc"] },
  { width: 26, items: ["sShapes"] },
  { width: 26, items: ["sPerf"] },
  { width: 50, items: ["sFull", "sMenu"] },
];

const layerTools = [
  { icons: ["lyOff", "lyIso", "lyFreeze", "lyLock", "lyCurrent"], label: "Make Current" },
  { icons: ["lyOn", "lyUniso", "lyThaw", "lyUnlock", "lyMatch"], label: "Match Layer" },
];

export default function App() {
  return (
    <Screen>
      <GlobalStyle />
      <AppButton aria-label="Application menu">
        <svg width="24" height="27" viewBox="0 0 24 27" aria-hidden="true">
          <path d="M1 26L9 1h7l7 25h-6l-2-7H9l-3 7z" fill="#c8262c" />
          <path d="M10 15h4L12 6z" fill="#b0b0b0" />
          <path d="M1 26L9 1h3L6 26z" fill="#8e1218" />
          <path d="M16 1l7 25h-4L12 4z" fill="#e2484c" />
        </svg>
        <Caret $color="#222" />
      </AppButton>
      <TitleBar>
        <QuickAccess>
          {["new", "open", "save", "saveas", "print", "undo"].map((n) => (
            <ToolButton key={n} aria-label={n}><Glyph name={n} /></ToolButton>
          ))}
          <Caret />
          <ToolButton aria-label="redo"><Glyph name="redo" /></ToolButton>
          <Caret $color="#ccc" />
          <Caret $size={4} />
        </QuickAccess>
        <WindowTitle>{"Autodesk AutoCAD 2017    Drawing2.dwg"}</WindowTitle>
        <InfoCenter onSubmit={(e) => e.preventDefault()}>
          <Expander />
          <SearchBox aria-label="Search" placeholder="Type a keyword or phrase" />
          <ToolButton type="button" aria-label="search"><Glyph name="search" /></ToolButton>
          <ToolButton type="button" aria-label="account"><Glyph name="user" /></ToolButton>
          <SignIn type="button">Sign In<Caret /></SignIn>
          <ToolButton type="button" aria-label="exchange"><Glyph name="exchange" /></ToolButton>
          <ToolButton type="button" aria-label="a360"><Glyph name="a360" /></ToolButton>
          <Caret />
          <Rule />
          <ToolButton type="button" aria-label="help"><Glyph name="help" /></ToolButton>
          <Caret />
        </InfoCenter>
        <WindowButtons>
          <WindowButton aria-label="Minimize"><svg width="10" height="10"><path d="M1 8h8" stroke="#222" strokeWidth="2" /></svg></WindowButton>
          <WindowButton aria-label="Restore"><svg width="10" height="10" fill="none" stroke="#222"><path d="M2.500 2V.500h7v7H8" /><path d="M.500 3h7v6.500h-7z" strokeWidth="1.500" /></svg></WindowButton>
          <WindowButton $close aria-label="Close"><svg width="9" height="9"><path d="M1 1l7 7M8 1L1 8" stroke="#fff" strokeWidth="1.500" /></svg></WindowButton>
        </WindowButtons>
      </TitleBar>
      <RibbonTabs>
        {ribbonTabs.map((t, i) => <RibbonTab key={t} $active={i === 0}>{t}</RibbonTab>)}
        <Minimize aria-label="Minimize ribbon"><MinimizeChip /><Caret /></Minimize>
      </RibbonTabs>
      <Ribbon>
        <RibbonPanel title="Draw" width={224}>
          <Big icon="line" width={42}>Line</Big>
          <Big icon="polyline" width={44}>Polyline</Big>
          <Big icon="circle" width={56} menu>Circle</Big>
          <Big icon="arc" width={36} menu>Arc</Big>
          <Gap $w={7} />
          <Stack $width={28}>
            {["rect", "ellipse", "hatch"].map((n) => <Small key={n} icon={n} menu />)}
          </Stack>
        </RibbonPanel>
        <RibbonPanel title="Modify" width={250}>
          <Gap $w={7} />
          <Stack $width={72}><Small icon="move" label="Move" /><Small icon="copy" label="Copy" /><Small icon="stretch" label="Stretch" /></Stack>
          <Stack $width={69}><Small icon="rotate" label="Rotate" /><Small icon="mirror" label="Mirror" /><Small icon="scale" label="Scale" /></Stack>
          <Stack $width={62}><Small icon="trim" label="Trim" menu /><Small icon="fillet" label="Fillet" menu /><Small icon="array" label="Array" menu /></Stack>
          <Gap $w={13} />
          <Stack><Small icon="erase" /><Small icon="explode" /><Small icon="offset" /></Stack>
        </RibbonPanel>
        <RibbonPanel title="Annotation" width={190}>
          <Big icon="text" width={48} menu>Text</Big>
          <Big icon="dimension" width={60}>Dimension</Big>
          <Gap $w={6} />
          <Stack $width={68}><Small icon="linear" label="Linear" menu /><Small icon="leader" label="Leader" menu /><Small icon="table" label="Table" /></Stack>
        </RibbonPanel>
        <RibbonPanel title="Layers" width={273}>
          <Big icon="layers" width={62}>Layer<br />Properties</Big>
          <Stack>
            <Combo $width={207}>
              <Glyph name="bulb" /><Glyph name="sun" /><Glyph name="unlock" /><Swatch />
              <select aria-label="Current layer"><option>_FVPRO26 - Circulac</option></select>
              <Caret $size={4} />
            </Combo>
            {layerTools.map((row) => (
              <IconRow key={row.label}>
                {row.icons.map((n) => <ToolButton key={n} aria-label={n}><Glyph name={n} /></ToolButton>)}
                <ToolLabel>{row.label}</ToolLabel>
              </IconRow>
            ))}
          </Stack>
        </RibbonPanel>
        <RibbonPanel title="Block" width={162}>
          <Big icon="insert" width={42} menu>Insert</Big>
          <Gap $w={3} />
          <Stack $width={110}><Small icon="create" label="Create" /><Small icon="edit" label="Edit" /><Small icon="attrs" label="Edit Attributes" menu /></Stack>
        </RibbonPanel>
        <RibbonPanel title="Properties" width={256}>
          <Big icon="match" width={62}>Match<br />Properties</Big>
          <Stack $width={19}><Small icon="wheel" /><Small icon="weights" /><Small icon="types" /></Stack>
          <Stack>
            <Combo $width={176}><Swatch $light /><select aria-label="Object color"><option>ByLayer</option></select><Caret /></Combo>
            <Combo $width={176}>
              <svg width="62" height="2"><path d="M4 1h58" stroke="#fff" /></svg>
              <select aria-label="Lineweight"><option>ByLayer</option></select><Caret />
            </Combo>
            <Combo $width={176}>
              <svg width="62" height="2"><path d="M4 1h58" stroke="#fff" strokeDasharray="15 7" /></svg>
              <select aria-label="Linetype"><option>ByLayer</option></select><Caret />
            </Combo>
          </Stack>
        </RibbonPanel>
      </Ribbon>
      <FileTabs>
        <FileTab>Start</FileTab>
        <FileTab $active>Drawing2*<svg width="8" height="8"><path d="M1 1l6 6M7 1L1 7" stroke="#444" strokeWidth="1.500" /></svg></FileTab>
        <AddTab aria-label="New tab">+</AddTab>
      </FileTabs>
      <Workspace>
        <PaletteDock>
          <Palette>
            <PaletteTitle>TOOL PALETTES - DIBUJO (D...</PaletteTitle>
            {paletteGroups.map((g) => (
              <Group key={g.title}>
                <h3>{g.title}</h3>
                {g.items.map(([icon, label]) => (
                  <PaletteItem key={label}><RoofIcon name={icon} />{label}</PaletteItem>
                ))}
              </Group>
            ))}
          </Palette>
          <SideTabs>
            {sideTabs.map((t, i) => <SideTab key={t} $active={i === 0}><span>{t}</span></SideTab>)}
          </SideTabs>
        </PaletteDock>
        <Stage>
          <DrawingRow>
            <SideToolbar>
              <ToolbarGrip />
              <ToolbarSlot>Un</ToolbarSlot>
              {toolbarGroups.map((group) => (
                <React.Fragment key={group[0]}>
                  <ToolbarRule />
                  {group.map((n) => <ToolbarSlot key={n} aria-label={n}><Glyph name={n} size={14} /></ToolbarSlot>)}
                </React.Fragment>
              ))}
            </SideToolbar>
            <Viewport>
              <ModelSpace />
              <ViewLabel>[−][Top][2D Wireframe]</ViewLabel>
              <Callout>
                <h2>MÓDULO DE DIBUJO BASE</h2>
                <CalloutArrow />
                <p>CREACIÓN DE CUBIERTAS - CIRCULACIONES - TRABAJO CON IMÁGENES</p>
                <p>ESCALADO DE IMÁGENES - ALINEACIÓN DE IMÁGENES - HACTH PROPIOS</p>
                <p>ELEMENTOS DE CUBIERTA - TIPOS DE LÍNEA - NORTES - TEXTOS</p>
                <p>ESTRUCTURAS METÁLICAS - ELEMENTOS CONSTRUCTIVOS, ETC.</p>
              </Callout>
            </Viewport>
          </DrawingRow>
          <CommandPanel>
            <CommandHandle>
              <HandleDots />
              <ToolButton aria-label="Close command line"><Glyph name="cross" size={13} /></ToolButton>
              <ToolButton aria-label="Customize"><Glyph name="wrench" size={14} /></ToolButton>
            </CommandHandle>
            <CommandMain>
              <History>{`FV26: Tipos de lineas
Command: '_.zoom
Specify corner of window, enter a scale factor (nX or nXP), or
[All/Center/Dynamic/Extents/Previous/Scale/Window/Object] <real time>: _e`}</History>
              <Prompt>
                <Glyph name="prompt" size={14} />
                <Caret $color="#666" />
                <input aria-label="Command" placeholder="Type a command" />
              </Prompt>
            </CommandMain>
          </CommandPanel>
        </Stage>
      </Workspace>
      <BottomBar>
        <LayoutTabs>
          <LayoutTab $active>Model</LayoutTab>
          <LayoutTab>PLANTA</LayoutTab>
          <LayoutTab>DETALLES</LayoutTab>
          <LayoutTab>UNILINEAL</LayoutTab>
          <AddLayout aria-label="New layout">+</AddLayout>
        </LayoutTabs>
        <StatusBar>
          {statusSegments.map((s) => (
            <Segment key={s.items[0]} $width={s.width}>
              {s.items.map((item, i) =>
                item === "caret" ? <Caret key={i} $size={4} /> : glyphs[item] ? (
                  <ToolButton key={i} aria-label={item}><Glyph name={item} size={15} /></ToolButton>
                ) : (
                  <ToolButton key={i}>{item}</ToolButton>
                )
              )}
            </Segment>
          ))}
        </StatusBar>
      </BottomBar>
      <ProductCard>
        <Badge>Fv</Badge>
        <BadgeRule />
        <ProductName>
          FV-Pro <strong>2026</strong>
          <div>FOTOVOLTAICA</div>
        </ProductName>
      </ProductCard>
    </Screen>
  );
}
